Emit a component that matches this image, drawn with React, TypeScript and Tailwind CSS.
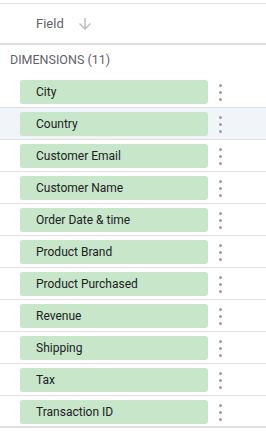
import React from 'react'

const fields = [
  'City',
  'Country',
  'Customer Email',
  'Customer Name',
  'Order Date & time',
  'Product Brand',
  'Product Purchased',
  'Revenue',
  'Shipping',
  'Tax',
  'Transaction ID',
]

const Kebab = () => (
  <div className="flex flex-col items-center gap-[4px] w-[24px]">
    <span className="w-[3px] h-[3px] rounded-full bg-[#9e9e9e]" />
    <span className="w-[3px] h-[3px] rounded-full bg-[#9e9e9e]" />
    <span className="w-[3px] h-[3px] rounded-full bg-[#9e9e9e]" />
  </div>
)

const App = () => {
  return (
    <div className="w-[266px] h-[431px] bg-white pt-[3px] font-['Roboto',sans-serif] overflow-hidden">
      <div className="h-[42px] border-t border-[#e0e0e0] border-b-2 border-b-[#e0e0e0] flex items-center pl-[36px]">
        <span className="text-[13px] text-[#5f6368]">Field</span>
        <svg className="ml-[12px]" width="18" height="18" viewBox="0 0 24 24" fill="#bdbdbd">
          <path d="M20 12l-1.41-1.41L13 16.17V4h-2v12.17l-5.58-5.59L4 12l8 8 8-8z" />
        </svg>
      </div>
      <div className="h-[31px] flex items-center pl-[10px] text-[12.5px] text-[#5f6368]">
        DIMENSIONS (11)
      </div>
      <div>
        {fields.map((f, i) => (
          <div
            key={f}
            className={`h-[32px] pt-[4px] pb-[3px] border-b border-[#e0e0e0] flex items-start ${i === 1 ? 'bg-[#f1f4f9]' : 'bg-white'} ${i === fields.length - 1 ? 'border-b-2' : ''}`}
          >
            <div className="ml-[20px] w-[188px] h-[24px] rounded-[3px] bg-[#c8e6c9] flex items-center pl-[16px] text-[12px] text-[#202124]">
              {f}
            </div>
            <div className="h-[24px] flex items-center">
              <Kebab />
            </div>
          </div>
        ))}
      </div>
    </div>
  )
}

export default App
